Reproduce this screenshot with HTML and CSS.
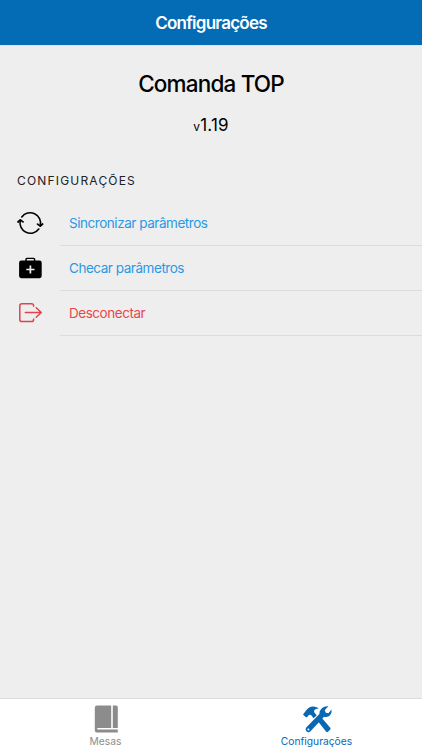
FILE: index.html
```html
<!DOCTYPE html>
<html lang="pt-BR">
<head>
<meta charset="utf-8">
<title>Configurações</title>
<link rel="stylesheet" href="styles.css">
</head>
<body>
<header class="navbar"><h1 class="navbar-title">Configurações</h1></header>
<main class="content">
  <h2 class="app-name">Comanda TOP</h2>
  <p class="version"><small>v</small>1.19</p>
  <h3 class="section-title">Configurações</h3>
  <ul class="list">
    <li class="item">
      <svg class="item-icon" viewBox="0 0 30 30" fill="none" stroke="#000" stroke-width="1.6" stroke-linecap="round" stroke-linejoin="round"><path d="M6.8 9A10.4 10.4 0 0 1 25.3 17.6M23.8 21A10.4 10.4 0 0 1 5.3 12.4"/><path d="M3 14L5.3 11.9L8 13.9M22.6 16.1L25.3 18.1L27.6 16" stroke-width="1.8"/></svg>
      <span class="item-label">Sincronizar parâmetros</span>
    </li>
    <li class="item">
      <svg class="item-icon" viewBox="0 0 30 30"><path fill="#000" fill-rule="evenodd" d="M10.3 7.6V6.2Q10.3 4.7 11.8 4.7H18.8Q20.3 4.7 20.3 6.2V7.6H24.6Q26.7 7.6 26.7 9.7V23.1Q26.7 25.2 24.6 25.2H6.2Q4.1 25.2 4.1 23.1V9.7Q4.1 7.6 6.2 7.6ZM11.8 7.6H18.8V6.1H11.8Z"/><path d="M15.4 12.4V20.6M11.3 16.5H19.5" stroke="#eee" stroke-width="1.7"/></svg>
      <span class="item-label">Checar parâmetros</span>
    </li>
    <li class="item">
      <svg class="item-icon" viewBox="0 0 30 30" fill="none" stroke="#e0444a" stroke-width="1.5" stroke-linecap="round" stroke-linejoin="round"><path d="M18.6 8.2V7.8Q18.6 5.7 16.5 5.7H6.9Q4.8 5.7 4.8 7.8V21.4Q4.8 23.5 6.9 23.5H16.5Q18.6 23.5 18.6 21.4V20.9M10.3 14.5H26M21.2 9.7L26.3 14.5L21.2 19.3"/></svg>
      <span class="item-label logout">Desconectar</span>
    </li>
  </ul>
</main>
<nav class="tabs">
  <a class="tab">
    <svg class="tab-icon" viewBox="0 0 30 30" fill="#8c8c8c"><path d="M6 1.6H20.2V24H6.8Q6.1 24 6.1 24.7T6.8 25.4H26.8V28.5H6Q3.8 28.5 3.8 26.3V3.8Q3.8 1.6 6 1.6ZM21.8 1.6H25.2Q26.8 1.6 26.8 3.2V24H21.8Z"/></svg>
    <span class="tab-label">Mesas</span>
  </a>
  <a class="tab active">
    <svg class="tab-icon" viewBox="0 0 30 30" fill="#0968b3"><path d="M1 10.4L4.1 6.5Q7.2 2.3 11.2 2.5Q14.4 2.6 16.8 4.6Q12.4 4.7 12.1 7.1Q12 8.2 13.1 9.4L14.8 11.3L11.6 14.2L9 11.1Q7.6 10.4 6.7 11.1L6.1 12.2L4.1 13.6Z"/><path d="M16.3 17.7L20.1 14.3L28.2 23.7Q29 24.7 28.1 25.7L25.9 27.8Q25 28.6 24 27.5Z"/><path fill-rule="evenodd" d="M26.4 2.3L22.7 6.3L23.8 8.8L26.4 9.3L29.5 5.4Q30 9.7 27.2 11.9Q24.9 13.5 22 12.8L8.5 27.3Q6.6 28.9 4.6 27.5Q2.6 25.6 4.2 23.6L17.4 9.9Q17.2 6.4 20.1 4Q22.8 1.8 26.4 2.3ZM6.4 24.6A1 1 0 1 0 6.4 26.6A1 1 0 1 0 6.4 24.6Z"/></svg>
    <span class="tab-label">Configurações</span>
  </a>
</nav>
</body>
</html>
```
FILE: styles.css
```css
* { box-sizing: border-box; }
body {
  margin: 0;
  height: 750px;
  display: flex;
  flex-direction: column;
  overflow: hidden;
  background: #eee;
  color: #000;
  font-family: Inter, "Liberation Sans", sans-serif;
}
h1, h2, h3, p, ul { margin: 0; padding: 0; font-weight: 400; }
.navbar {
  height: 45px;
  background: #046bb5;
  display: flex;
  justify-content: center;
  align-items: center;
}
.navbar-title { color: #fff; font-size: 17px; font-weight: 600; line-height: 24px; letter-spacing: -0.75px; }
.content { flex: 1; border-top: 1px solid #d8e7f2; }
.app-name { margin-top: 23px; text-align: center; font-size: 22.5px; line-height: 30px; letter-spacing: -0.82px; font-weight: 450; }
.version { margin-top: 16px; text-align: center; font-size: 17px; line-height: 20px; letter-spacing: 0.15px; }
.version small { font-size: 12px; }
.section-title { margin: 35px 0 0 17px; font-size: 12px; line-height: 18px; letter-spacing: 1.18px; text-transform: uppercase; color: #222; }
.list { list-style: none; margin-top: 11px; }
.item { height: 45px; display: flex; align-items: center; padding: 0 0 1px 15px; position: relative; }
.item::after { content: ""; position: absolute; left: 60px; right: 0; bottom: 0; height: 1px; background: #dadcdf; }
.item-icon { width: 30px; height: 30px; flex: none; }
.item-label { margin-left: 24px; font-size: 13.5px; line-height: 20px; letter-spacing: -0.46px; color: #2a99e5; white-space: nowrap; }
.logout { color: #e8484d; }
.tabs { height: 52px; background: #fff; border-top: 1px solid #dcdcdc; display: flex; }
.tab { flex: 1; display: flex; flex-direction: column; align-items: center; padding-top: 5px; color: #8c8c8c; }
.active { color: #0968b3; }
.tab-icon { width: 30px; height: 30px; }
.tab-label { font-size: 10.25px; line-height: 14px; letter-spacing: 0; }
```
